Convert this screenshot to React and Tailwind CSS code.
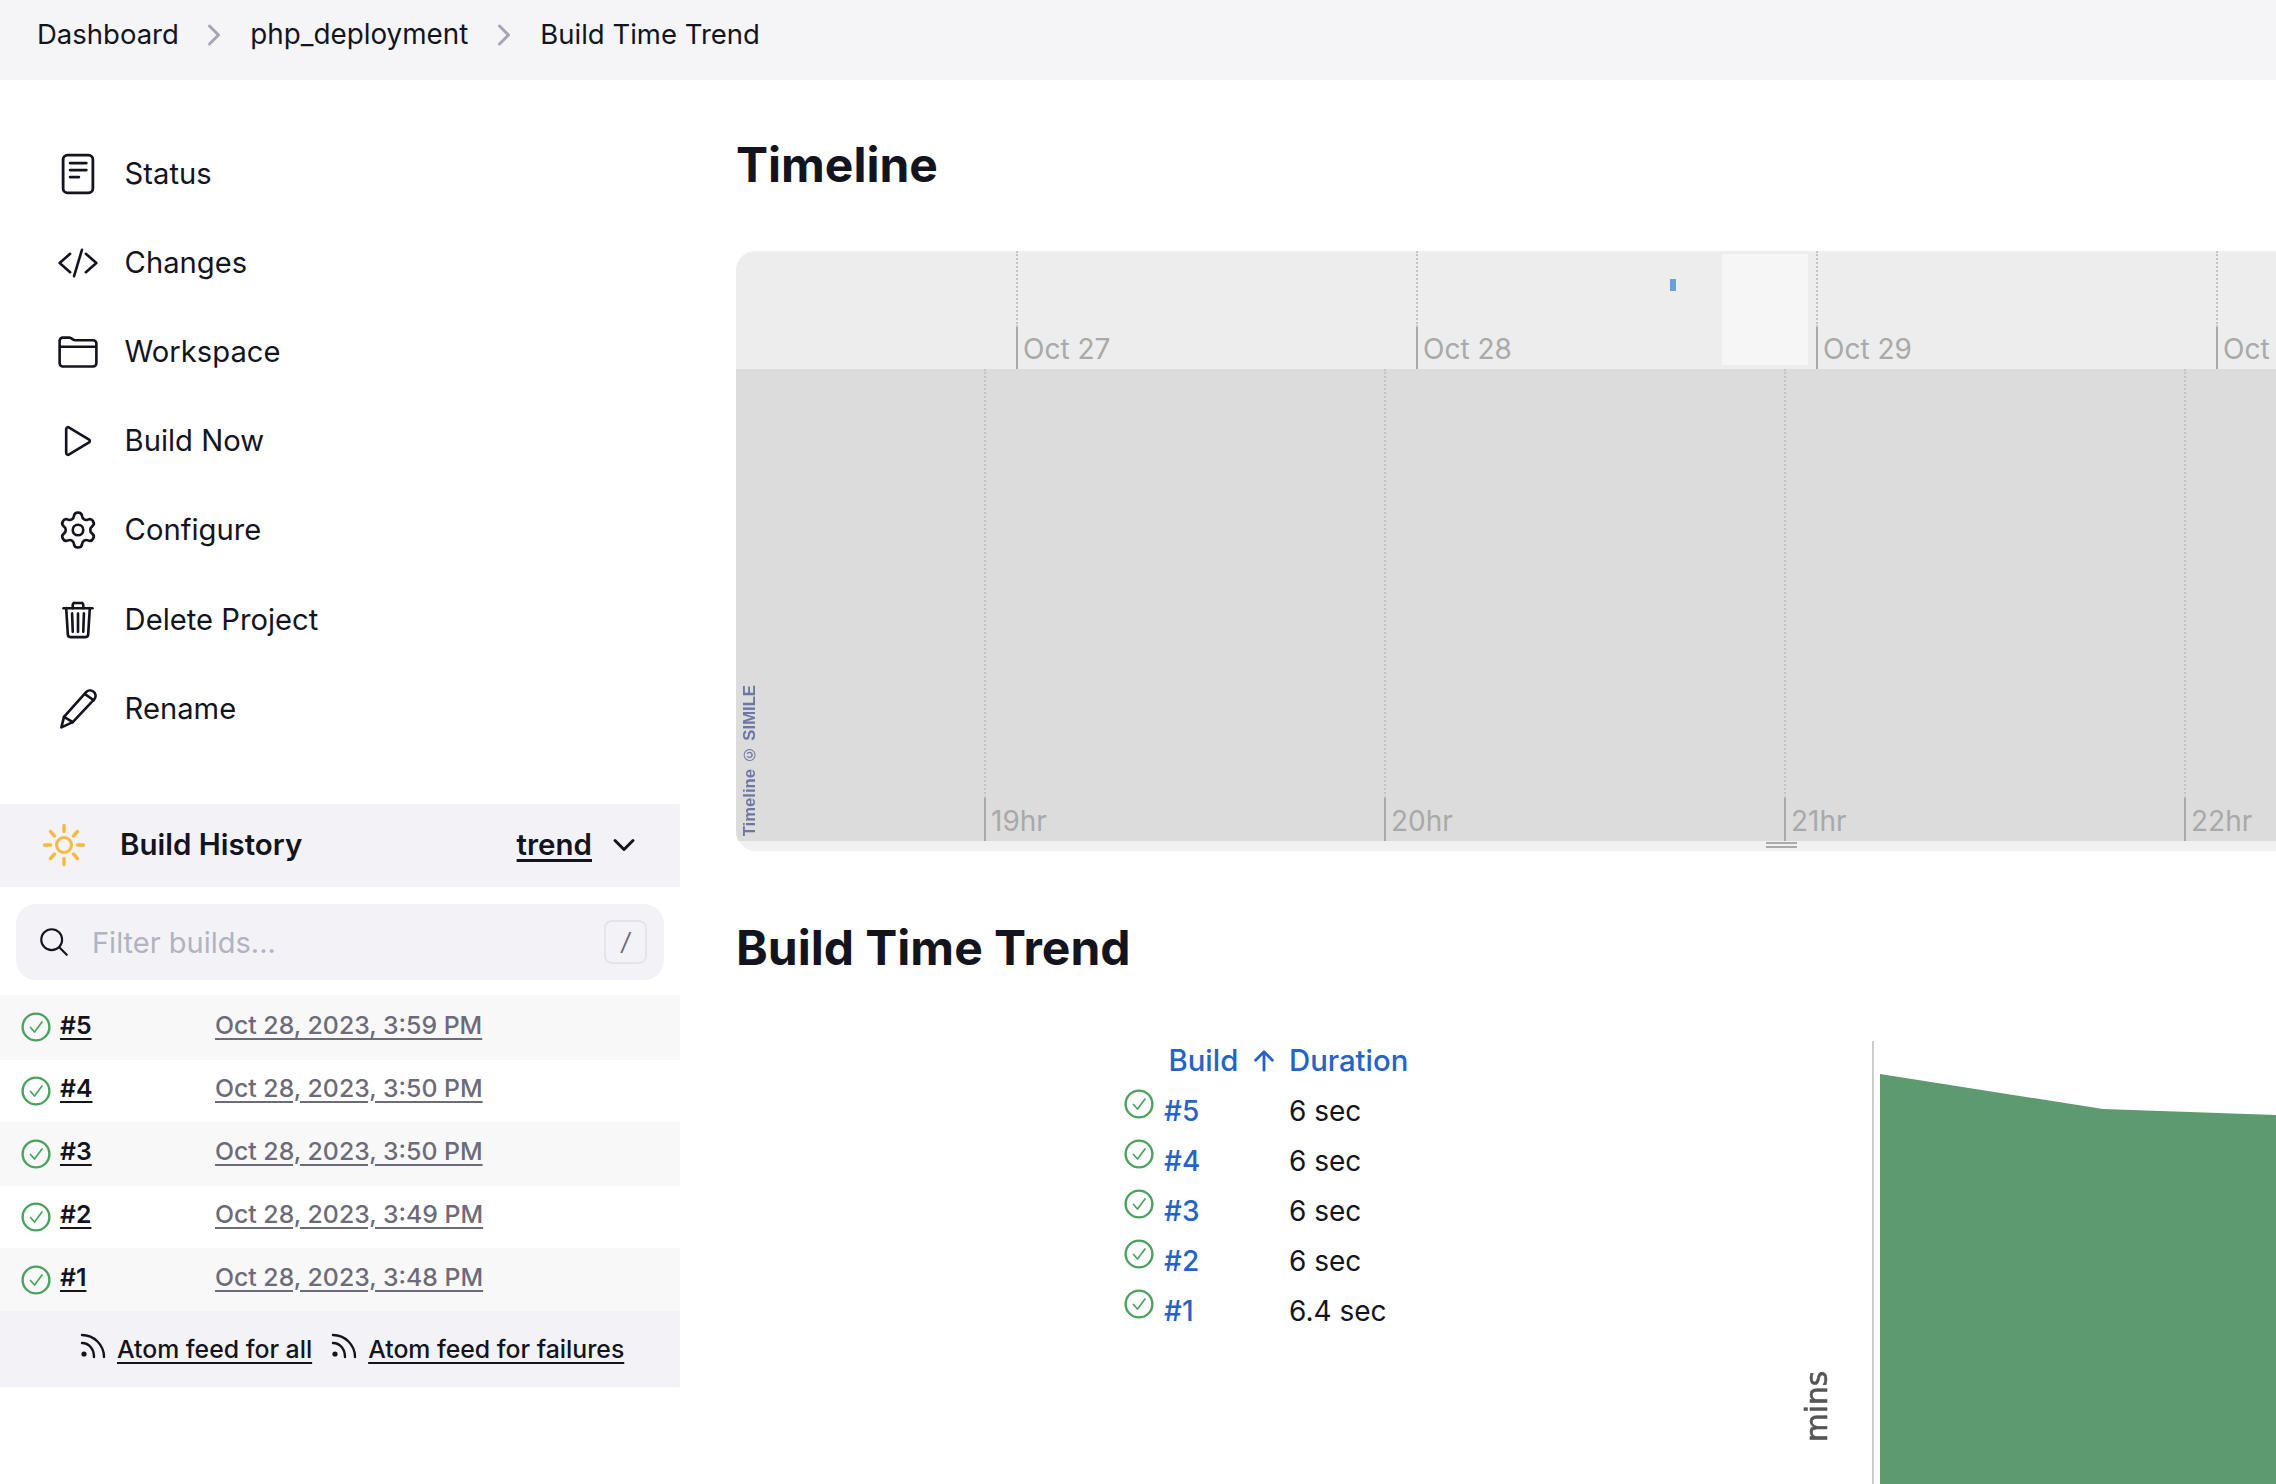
import React from 'react';
import {
  IoChevronForwardOutline,
  IoChevronDownOutline,
  IoCodeSlashOutline,
  IoFolderOutline,
  IoPlayOutline,
  IoTrashOutline,
  IoSearchOutline,
  IoArrowUpOutline,
} from 'react-icons/io5';
import { Settings } from 'lucide-react';

const builds = [
  { id: '#5', date: 'Oct 28, 2023, 3:59 PM', duration: '6 sec' },
  { id: '#4', date: 'Oct 28, 2023, 3:50 PM', duration: '6 sec' },
  { id: '#3', date: 'Oct 28, 2023, 3:50 PM', duration: '6 sec' },
  { id: '#2', date: 'Oct 28, 2023, 3:49 PM', duration: '6 sec' },
  { id: '#1', date: 'Oct 28, 2023, 3:48 PM', duration: '6.4 sec' },
];

function StatusDoc({ size }) {
  return (
    <svg width={size} height={size} viewBox="0 0 48 48" fill="none" stroke="currentColor" strokeWidth="3.2" strokeLinecap="round" strokeLinejoin="round">
      <rect x="7" y="2.5" width="34" height="43" rx="5" />
      <path d="M15 11.5h18.5M15 19.5h18.5M15 27.5h10" />
    </svg>
  );
}

function Gear({ size }) {
  return <Settings size={size} strokeWidth={1.5} />;
}

function Pencil({ size }) {
  return (
    <svg width={size} height={size} viewBox="0 0 48 48" fill="none" stroke="currentColor" strokeWidth="3" strokeLinecap="round" strokeLinejoin="round">
      <path d="M5 45l3-12L33 5c2-2.4 5.5-3 8.4-1s3.6 5.6 1.6 8.4L18 39z" />
      <path d="M8 33l10 6M32 7l10 7" />
    </svg>
  );
}

function Sun() {
  return (
    <svg width="46" height="46" viewBox="0 0 46 46" fill="none" stroke="#f8b93e" strokeLinecap="round" className="shrink-0">
      <circle cx="23" cy="23" r="7.5" strokeWidth="3" />
      <path d="M23 3.5v6M23 36.5v6M3.5 23h6M36.5 23h6M9.5 9.5l4 4.5M32.5 32l4 4.5M36.5 9.5l-4 4.5M13.5 32l-4 4.5" strokeWidth="3.4" />
    </svg>
  );
}

const menu = [
  { label: 'Status', Icon: StatusDoc },
  { label: 'Changes', Icon: IoCodeSlashOutline },
  { label: 'Workspace', Icon: IoFolderOutline },
  { label: 'Build Now', Icon: IoPlayOutline },
  { label: 'Configure', Icon: Gear },
  { label: 'Delete Project', Icon: IoTrashOutline },
  { label: 'Rename', Icon: Pencil },
];

function CheckCircle() {
  return (
    <svg width="30" height="30" viewBox="0 0 30 30" fill="none" className="shrink-0 text-[#4aa35c]" stroke="currentColor">
      <circle cx="15" cy="15" r="13.4" strokeWidth="2.4" />
      <path d="M9.5 15.5l4 4.5 7.5-10" strokeWidth="1.7" strokeLinecap="round" strokeLinejoin="round" />
    </svg>
  );
}

function Rss() {
  return (
    <svg width="28" height="28" viewBox="0 0 28 28" fill="none" stroke="currentColor" strokeWidth="2.4" strokeLinecap="round" className="shrink-0 -mt-[8px]">
      <circle cx="5" cy="22" r="2.6" fill="currentColor" stroke="none" />
      <path d="M3 11c7 0 12 6 12 14" />
      <path d="M3 3c12 0 22 10 22 22" />
    </svg>
  );
}

function Ticks({ positions, labels, bandHeight, solidHeight, offset }) {
  return positions.map((x, i) => (
    <div key={x} className="absolute top-0" style={{ left: x - offset, height: bandHeight }}>
      <div className="absolute left-0 top-0 border-l-2 border-dotted border-[#c4c4c4]" style={{ height: bandHeight - solidHeight }} />
      <div className="absolute left-0 bottom-0 w-[2px] bg-[#a9a9a9]" style={{ height: solidHeight }} />
      <span className="absolute left-[7px] bottom-[3px] text-[28px] leading-[34px] text-[#a9a9a9] whitespace-nowrap">{labels[i]}</span>
    </div>
  ));
}

export default function App() {
  return (
    <div className="w-[2276px] h-[1484px] overflow-hidden bg-white text-[#14141f] font-['Inter',sans-serif]">
      {/* Breadcrumbs */}
      <header className="h-[80px] pb-[10px] bg-[#f5f5f8] flex items-center pl-[37px] text-[27.5px]">
        <span>Dashboard</span>
        <IoChevronForwardOutline size={32} className="text-[#a5a5b3] ml-[19px] mr-[20.5px]" />
        <span className="text-[27.8px]">php_deployment</span>
        <IoChevronForwardOutline size={32} className="text-[#a5a5b3] mx-[20px]" />
        <span>Build Time Trend</span>
      </header>

      <div className="flex">
        {/* Sidebar */}
        <aside className="w-[680px] shrink-0 pt-[49px]">
          <nav className="pl-[57px]">
            {menu.map(({ label, Icon }) => (
              <div key={label} className="h-[89.2px] flex items-center gap-[25.6px] text-[29.2px]">
                <Icon size={42} />
                <span>{label}</span>
              </div>
            ))}
          </nav>

          <div className="mt-[50.6px] h-[83px] bg-[#f3f3f7] flex items-center pl-[41px] pr-[40px]">
            <Sun />
            <span className="ml-[33px] -mt-[2px] text-[29.5px] font-semibold">Build History</span>
            <span className="ml-auto -mt-[2px] text-[29.5px] font-semibold underline underline-offset-4 decoration-[3px]">trend</span>
            <IoChevronDownOutline size={32} className="ml-[16px]" />
          </div>

          <div className="mt-[17px] mx-[16px] h-[76px] rounded-[20px] bg-[#f3f3f7] flex items-center pl-[21px] pr-[17px]">
            <IoSearchOutline size={34} />
            <span className="ml-[21px] pt-[2px] text-[29px] text-[#b2b2c0]">Filter builds...</span>
            <span className="ml-auto w-[43px] h-[44px] rounded-[8px] border-2 border-[#e4e4ec] flex items-center justify-center text-[24px] italic text-[#6d6b7a]">/</span>
          </div>

          <div className="mt-[15px]">
            {builds.map((b, i) => (
              <div key={b.id} className={`flex items-center pl-[21px] ${i === 0 ? 'h-[65px] bg-[#f8f8f9]' : i % 2 === 0 ? 'h-[64px] bg-[#f8f8f9]' : 'h-[62px]'}`}>
                <CheckCircle />
                <span className={`ml-[9px] w-[155px] text-[24.8px] font-semibold underline underline-offset-4 ${i === 0 ? '-mt-[3px]' : '-mt-[5px]'}`}>{b.id}</span>
                <span className={`text-[24.8px] font-medium text-[#6d6b7a] underline underline-offset-4 ${i === 0 ? '-mt-[3px]' : '-mt-[5px]'}`}>{b.date}</span>
              </div>
            ))}
          </div>

          <div className="h-[76px] -mt-[1px] pt-[2px] bg-[#f3f3f7] flex items-center pl-[79px] text-[24.8px] font-medium">
            <Rss />
            <span className="ml-[10px] underline underline-offset-4">Atom feed for all</span>
            <span className="ml-[18px]"><Rss /></span>
            <span className="ml-[10px] underline underline-offset-4">Atom feed for failures</span>
          </div>
        </aside>

        {/* Main */}
        <main className="flex-1 min-w-0 pl-[56px]">
          <h1 className="pt-[54px] h-[171px] text-[48px] leading-[62px] font-bold">Timeline</h1>

          <div className="rounded-l-[20px] overflow-hidden bg-[#f0f0f0] h-[600px]">
            <div className="relative h-[118px] bg-[#ededed]">
              <Ticks positions={[1016, 1416, 1816, 2216]} labels={['Oct 27', 'Oct 28', 'Oct 29', 'Oct']} bandHeight={118} solidHeight={42} offset={736} />
              <div className="absolute left-[934px] top-[28px] w-[6px] h-[12px] bg-[#6a9fdc]" />
              <div className="absolute left-[986px] top-[3px] w-[86px] h-[111px] bg-[#f6f6f6]" />
            </div>
            <div className="relative h-[472px] bg-[#dcdcdc]">
              <Ticks positions={[984, 1384, 1784, 2184]} labels={['19hr', '20hr', '21hr', '22hr']} bandHeight={472} solidHeight={43} offset={736} />
              <span className="absolute left-[5px] bottom-[5px] [writing-mode:vertical-rl] rotate-180 font-['Liberation_Sans',sans-serif] font-bold text-[16.7px] leading-[18px] text-[#6c78a3] blur-[0.4px] whitespace-nowrap">Timeline © SIMILE</span>
            </div>
            <div className="relative h-[10px]">
              <div className="absolute left-[1030px] top-[1px] w-[31px] h-[6px] border-y-2 border-[#aaaaaa]" />
            </div>
          </div>

          <h1 className="mt-[66px] text-[48px] leading-[62px] font-bold">Build Time Trend</h1>

          <div className="mt-[62px] flex">
            <div className="ml-[388px] w-[556px] shrink-0 text-[28px]">
              <div className="h-[40px] mb-[5px] flex items-center text-[29.3px] font-medium text-[#2563c9]">
                <span className="ml-[44.5px] w-[69px] shrink-0">Build</span>
                <IoArrowUpOutline size={30} className="ml-[11px] shrink-0" />
                <span className="ml-[10.5px]">Duration</span>
              </div>
              {builds.map((b) => (
                <div key={b.id} className="h-[50px] flex items-center">
                  <span className="-mt-[14px]"><CheckCircle /></span>
                  <span className="ml-[10px] w-[125px] font-medium text-[#2563c9]">{b.id}</span>
                  <span>{b.duration}</span>
                </div>
              ))}
            </div>
            <div className="flex-1 flex justify-end">
              <span className="self-start mt-[330px] mr-[40px] [writing-mode:vertical-rl] rotate-180 font-['DejaVu_Sans',sans-serif] text-[29.5px] leading-[30px] text-[#555555] [-webkit-text-stroke:0.6px_#555555]">mins</span>
              <svg width="404" height="444" viewBox="1872 1040 404 444" className="shrink-0">
                <line x1="1873" y1="1040" x2="1873" y2="1484" stroke="#cccccc" strokeWidth="2" />
                <path d="M1880 1073L2103 1108L2276 1114V1484H1880Z" fill="#5e9a6f" />
              </svg>
            </div>
          </div>
        </main>
      </div>
    </div>
  );
}
